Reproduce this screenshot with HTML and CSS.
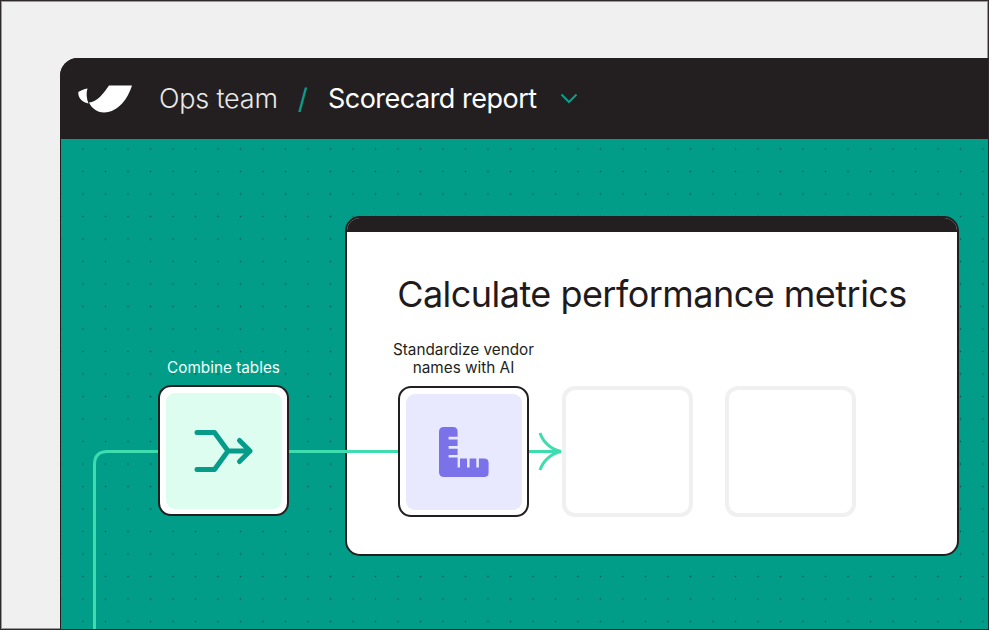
FILE: index.html
```html
<!DOCTYPE html>
<html lang="en">
<head>
<meta charset="utf-8">
<title>Scorecard report</title>
<link rel="stylesheet" href="styles.css">
</head>
<body>
<div class="frame">
  <div class="window">
    <header class="topbar">
      <svg class="logo" width="56" height="32" viewBox="0 0 56 32">
        <path class="logo-fill" d="M31 2.500H54C50 15 41 29 26 29.500C19 29.500 13.500 25 11 19.500C19 19 26 10 31 2.500Z"/>
        <path class="logo-fill" d="M9.500 5.500C6 6 2.500 7.500 0.300 9C0 14 3 19 10.500 20.500C8.500 15.500 8 10 9.500 5.500Z"/>
      </svg>
      <span class="crumb">Ops team</span>
      <span class="slash">/</span>
      <span class="title">Scorecard report</span>
      <svg class="chevron" width="18" height="11" viewBox="0 0 18 11"><path d="M1.500 1.500L9 9L16.500 1.500"/></svg>
    </header>
    <main class="canvas">
      <svg class="wires" width="928" height="491" viewBox="0 0 928 491">
        <path d="M33.500 491V325.500Q33.500 312.500 46.500 312.500H337"/>
        <path d="M468 312.500H500"/>
        <path d="M479 294C482 303 490 310.500 500 312.500C490 314.500 482 322 479 331"/>
      </svg>
      <section class="panel">
        <div class="panel-bar"></div>
        <h1 class="panel-title">Calculate performance metrics</h1>
        <div class="steps">
          <div class="step">
            <div class="step-label">Standardize vendor<br>names with AI</div>
            <div class="node">
              <div class="tile tile-violet">
                <svg width="50" height="50" viewBox="0 0 50 50"><path class="ruler" d="M5 0H14Q18.600 0 18.600 4.600V9.800H9.600V12.500H18.600V19.100H9.600V21.800H18.600V28.100H9.600V30.500H18.600V40.600H21V31.600H28V40.600H30.600V31.600H37.300V40.600H39.900V31.600H45Q49.600 31.600 49.600 36V45.400Q49.600 50 45 50H5Q0 50 0 45V5Q0 0 5 0Z"/></svg>
              </div>
            </div>
          </div>
          <div class="node node-empty"></div>
          <div class="node node-empty"></div>
        </div>
      </section>
      <div class="combine">
        <div class="step-label step-label-light">Combine tables</div>
        <div class="node">
          <div class="tile tile-mint">
            <svg class="merge-icon" width="60" height="42" viewBox="0 0 60 42"><path class="merge" d="M3 2.500H20.500L34 21L20.500 39.500H3M34 21H56M45.500 10.500L56 21L45.500 31.500"/></svg>
          </div>
        </div>
      </div>
    </main>
  </div>
</div>
</body>
</html>
```
FILE: styles.css
```css
* { box-sizing: border-box; }
html, body { margin: 0; padding: 0; }
body { font-family: "Inter", "Liberation Sans", sans-serif; }
.frame {
  width: 989px; height: 630px; overflow: hidden;
  background: #f0f0f0;
  border: 1px solid #2e2a2b;
  box-shadow: inset 0 0 0 1px #9a9798;
  padding: 57px 0 0 59px;
  display: flex;
}
.window {
  flex: 1; display: flex; flex-direction: column;
  border-radius: 18px 0 0 0; overflow: hidden;
  background: #231f20;
}
.topbar {
  height: 81px; flex: none;
  display: flex; align-items: center;
  padding-left: 18px;
  background: #231f20; color: #fff;
}
.logo { flex: none; margin-right: 25px; }
.logo-fill { fill: #fff; }
.crumb { font-size: 27px; font-weight: 300; letter-spacing: -0.2px; color: #e8e8e8; }
.slash { font-size: 28px; font-weight: 400; color: #0a9e8b; margin: 0 20px; }
.title { font-size: 27px; font-weight: 400; letter-spacing: -0.5px; color: #fff; }
.chevron { flex: none; margin-left: 23px; fill: none; }
.chevron path { fill: none; stroke: #0a9e8b; stroke-width: 2; }
.canvas {
  flex: 1; position: relative; overflow: hidden;
  margin-left: 1px;
  background-color: #019d89;
  background-image: radial-gradient(circle at center, #0d5f54 0, #0d5f54 .7px, transparent 1.1px);
  background-size: 22.5px 22.5px;
  background-position: 10.75px -1.25px;
}
.wires { position: absolute; left: 0; top: 0; z-index: 2; fill: none; pointer-events: none; }
.wires path { fill: none; stroke: #3fdcb0; stroke-width: 3; }
.panel {
  position: absolute; left: 284px; top: 77px;
  width: 614px; height: 340px;
  background: #fff;
  border: 2px solid #231f20;
  border-radius: 15px; overflow: hidden;
  display: flex; flex-direction: column;
}
.panel-bar { height: 14px; flex: none; background: #231f20; }
.panel-title {
  margin: 38px 0 0; text-align: center;
  font-size: 36px; font-weight: 400; letter-spacing: -0.53px; line-height: 48px; color: #1f1b1c;
}
.steps { display: flex; align-items: flex-end; gap: 32.5px; margin: 23px 0 0 51px; }
.step { display: flex; flex-direction: column; align-items: center; }
.step-label { font-size: 15.300px; line-height: 18px; text-align: center; color: #231f20; white-space: nowrap; margin: 0 -10px 9px; }
.step-label-light { color: #f2fff9; margin-bottom: 8px; }
.node {
  position: relative; z-index: 3;
  width: 131px; height: 131px; flex: none;
  background: #fff; border: 2px solid #231f20; border-radius: 13px;
  padding: 5.500px;
  display: flex;
}
.node-empty { border: 4px solid #f0f0f0; background: #fff; }
.tile { flex: 1; border-radius: 9px; display: flex; align-items: center; justify-content: center; }
.tile-mint { background: #dcfdf0; }
.tile-violet { background: #e8e8fe; }
.ruler { fill: #7b72ea; }
.merge { fill: none; stroke: #069c89; stroke-width: 5; stroke-linecap: round; stroke-linejoin: round; }
.combine {
  position: absolute; left: 97px; top: 220px; z-index: 3;
  display: flex; flex-direction: column; align-items: center;
}
```
